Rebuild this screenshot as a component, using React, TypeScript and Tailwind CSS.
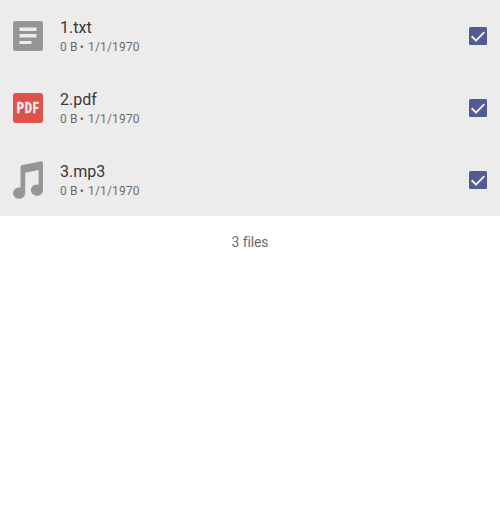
import React from 'react';

function TextIcon() {
  return (
    <svg viewBox="0 0 40 40" className="size-10" fill="none">
      <rect x="5" y="5" width="30" height="30" rx="3" fill="#969696" />
      <path d="M11.5 11.5h17v3.5h-17zM11.5 18h17v3.5h-17zM11.5 25h12v3h-12z" fill="#ececec" />
    </svg>
  );
}

function PdfIcon() {
  return (
    <div className="flex size-10 items-center justify-center">
      <div className="flex size-[30px] items-center justify-center rounded-[3px] bg-[#de5048]">
        <span className="scale-x-[0.8] pl-px text-[14px] leading-[30px] font-black tracking-[0.9px] text-[#ececec] [-webkit-text-stroke:0.3px_#ececec]">
          PDF
        </span>
      </div>
    </div>
  );
}

function MusicIcon() {
  return (
    <svg viewBox="0 0 40 40" className="size-10">
      <path
        d="M14.5 5 33 1.2Q35 .9 35 3v27.2a6.1 5.7 0 1 1-4.4-5.5V10L17.2 12.8v20.3a6.1 5.7 0 1 1-4.7-5.5V7.5Q12.5 5.4 14.5 5z"
        fill="#969696"
      />
    </svg>
  );
}

function Checkbox() {
  return (
    <svg viewBox="0 0 24 24" className="size-6">
      <rect x="3" y="3" width="18" height="18" rx="1.5" fill="#525a92" />
      <path d="M5.7 12.3 10 16.6l8.3-8.5" fill="none" stroke="#ececec" strokeWidth="2" />
    </svg>
  );
}

const files = [
  { name: '1.txt', Icon: TextIcon },
  { name: '2.pdf', Icon: PdfIcon },
  { name: '3.mp3', Icon: MusicIcon },
];

export default function App() {
  return (
    <main className="min-h-screen bg-white font-['Roboto',sans-serif]">
      <ul className="bg-[#ececec]">
        {files.map(({ name, Icon }) => (
          <li key={name} className="flex h-18 items-center pr-2.5 pl-2">
            <Icon />
            <div className="ml-3 flex-1 pt-0.5">
              <div className="text-base leading-5 text-[#383838]">{name}</div>
              <div className="text-xs leading-[18px] tracking-[0.15px] text-[#6c6c6c]">
                0 B<span className="mr-px -ml-px"> • </span>1/1/1970
              </div>
            </div>
            <Checkbox />
          </li>
        ))}
      </ul>
      <p className="pt-4 text-center text-sm leading-5 tracking-[-0.1px] text-[#6c6c6c]">3 files</p>
    </main>
  );
}
